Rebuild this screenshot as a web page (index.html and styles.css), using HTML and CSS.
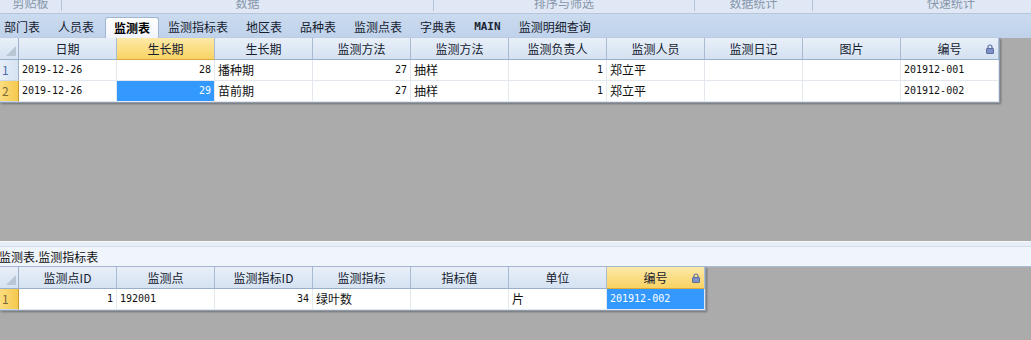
FILE: index.html
```html
<!DOCTYPE html>
<html lang="zh">
<head>
<meta charset="utf-8">
<title>监测表</title>
<link rel="stylesheet" href="styles.css">
</head>
<body>
<div class="ribbon">
  <div class="group g1"><span class="glabel">剪贴板</span></div>
  <div class="group g2"><span class="glabel">数据</span></div>
  <div class="group g3"><span class="glabel">排序与筛选</span></div>
  <div class="group g4"><span class="glabel">数据统计</span></div>
  <div class="group g5"><span class="glabel">快速统计</span></div>
</div>
<div class="tabs">
  <div class="tab first">部门表</div>
  <div class="tab">人员表</div>
  <div class="tab active">监测表</div>
  <div class="tab">监测指标表</div>
  <div class="tab">地区表</div>
  <div class="tab">品种表</div>
  <div class="tab">监测点表</div>
  <div class="tab">字典表</div>
  <div class="tab mono">MAIN</div>
  <div class="tab">监测明细查询</div>
</div>

<div class="grid top-grid">
  <div class="hc corner"><svg class="tri" width="10" height="10" viewBox="0 0 10 10"><polygon points="10,0 10,10 0,10" fill="#b9c6d6"/></svg></div>
  <div class="hc">日期</div>
  <div class="hc sel">生长期</div>
  <div class="hc">生长期</div>
  <div class="hc">监测方法</div>
  <div class="hc">监测方法</div>
  <div class="hc">监测负责人</div>
  <div class="hc">监测人员</div>
  <div class="hc">监测日记</div>
  <div class="hc">图片</div>
  <div class="hc">编号<svg class="lock" width="8" height="10" viewBox="0 0 8 10"><path d="M2 4.5V3a2 2 0 0 1 4 0v1.5" fill="none" stroke="#5b6fa8" stroke-width="1.2"/><rect x="0.5" y="4.5" width="7" height="5" rx="0.5" fill="#7d90c8" stroke="#4a5c96" stroke-width="0.8"/></svg></div>

  <div class="ri">1</div>
  <div class="c num">2019-12-26</div>
  <div class="c num r">28</div>
  <div class="c">播种期</div>
  <div class="c num r">27</div>
  <div class="c">抽样</div>
  <div class="c num r">1</div>
  <div class="c">郑立平</div>
  <div class="c"></div>
  <div class="c"></div>
  <div class="c num">201912-001</div>

  <div class="ri act">2</div>
  <div class="c num">2019-12-26</div>
  <div class="c num r pick">29</div>
  <div class="c">苗前期</div>
  <div class="c num r">27</div>
  <div class="c">抽样</div>
  <div class="c num r">1</div>
  <div class="c">郑立平</div>
  <div class="c"></div>
  <div class="c"></div>
  <div class="c num">201912-002</div>
</div>

<div class="spacer"></div>

<div class="subpanel">
  <div class="subtitle">监测表.监测指标表</div>
</div>

<div class="grid bottom-grid">
  <div class="hc corner"><svg class="tri" width="10" height="10" viewBox="0 0 10 10"><polygon points="10,0 10,10 0,10" fill="#b9c6d6"/></svg></div>
  <div class="hc">监测点ID</div>
  <div class="hc">监测点</div>
  <div class="hc">监测指标ID</div>
  <div class="hc">监测指标</div>
  <div class="hc">指标值</div>
  <div class="hc">单位</div>
  <div class="hc sel">编号<svg class="lock" width="8" height="10" viewBox="0 0 8 10"><path d="M2 4.5V3a2 2 0 0 1 4 0v1.5" fill="none" stroke="#5b6fa8" stroke-width="1.2"/><rect x="0.5" y="4.5" width="7" height="5" rx="0.5" fill="#7d90c8" stroke="#4a5c96" stroke-width="0.8"/></svg></div>

  <div class="ri act">1</div>
  <div class="c num r">1</div>
  <div class="c num">192001</div>
  <div class="c num r">34</div>
  <div class="c">绿叶数</div>
  <div class="c"></div>
  <div class="c">片</div>
  <div class="c num pick">201912-002</div>
</div>
</body>
</html>
```

FILE: styles.css
```css
html, body {
  margin: 0;
  padding: 0;
}
body {
  background: #ababab;
  font-family: "Noto Sans CJK SC", "Noto Sans", sans-serif;
  font-size: 12px;
  color: #111;
  width: 1031px;
  height: 340px;
  overflow: hidden;
}

/* ribbon group labels (clipped at top) */
.ribbon {
  height: 13px;
  background: #dfe8f4;
  border-bottom: 1px solid #b6c7dc;
  display: flex;
  overflow: hidden;
}
.group {
  flex: none;
  height: 11px;
  display: flex;
  justify-content: center;
  overflow: visible;
  border-right: 1px solid #b4c3d6;
  box-sizing: border-box;
}
.g1 { width: 62px; }
.g2 { width: 372px; }
.g3 { width: 261px; }
.g4 { width: 118px; }
.g5 { width: 276px; border-right: none; }
.glabel {
  color: #8796ab;
  line-height: 14px;
  margin-top: -4px;
  white-space: nowrap;
}

/* tab strip */
.tabs {
  height: 24px;
  background: linear-gradient(#cbdbef, #bfd2ea);
  display: flex;
  align-items: flex-end;
  padding-left: 4px;
  box-sizing: border-box;
}
.tab {
  height: 21px;
  line-height: 20px;
  padding: 0 9px;
  white-space: nowrap;
  color: #15202e;
  box-sizing: border-box;
}
.tab.first { padding-left: 0; }
.tab.mono {
  font-family: "DejaVu Sans Mono", monospace;
  font-size: 11px;
  font-weight: bold;
  color: #1b2533;
}
.tab.active {
  background: linear-gradient(#ffffff, #f1f5fb);
  border: 1px solid #a3b6cf;
  border-bottom: none;
  border-radius: 3px 3px 0 0;
  font-weight: bold;
  padding: 0 8px;
  margin-left: 2px;
  color: #000;
}

/* grids */
.grid {
  display: grid;
  background: #fff;
  border-right: 1px solid #8e9db2;
  border-bottom: 1px solid #8e9db2;
  box-shadow: 1px 1px 2px rgba(0, 0, 0, 0.35);
  width: max-content;
}
.top-grid {
  grid-template-columns: 19px repeat(10, 98px);
  grid-template-rows: 22px 21px 21px;
}
.bottom-grid {
  grid-template-columns: 19px repeat(7, 98px);
  grid-template-rows: 22px 21px;
}
.hc {
  position: relative;
  background: linear-gradient(#e8eff8, #d5e2f2);
  border-right: 1px solid #a9bbd2;
  border-bottom: 1px solid #9aafca;
  box-sizing: border-box;
  text-align: center;
  line-height: 21px;
  white-space: nowrap;
  color: #14202e;
}
.hc.sel {
  background: linear-gradient(#fdeaa9, #f9d262);
  border-bottom: 1px solid #d9a93e;
}
.hc.corner {
  border-right: 1px solid #9db1cb;
}
.tri {
  position: absolute;
  right: 2px;
  bottom: 3px;
}
.lock {
  position: absolute;
  right: 4px;
  top: 6px;
}
.ri {
  background: linear-gradient(90deg, #e6edf7, #d7e3f2);
  border-right: 1px solid #9db1cb;
  border-bottom: 1px solid #c9d6e6;
  box-sizing: border-box;
  color: #4a6fa8;
  line-height: 20px;
  padding-left: 2px;
}
.ri.act {
  background: linear-gradient(90deg, #fbdc7e, #f6c94f);
  border-right: 1px solid #c99a30;
  color: #7a6a3a;
}
.c {
  border-right: 1px solid #e3e8ef;
  border-bottom: 1px solid #e3e8ef;
  box-sizing: border-box;
  line-height: 20px;
  padding: 0 3px;
  white-space: nowrap;
  overflow: hidden;
  color: #111;
}
.c.num {
  font-family: "DejaVu Sans Mono", "Liberation Mono", monospace;
  font-size: 10px;
}
.c.r { text-align: right; }
.c.pick {
  background: #3399ff;
  color: #fff;
}

.spacer {
  height: 138px;
}

.subpanel {
  background: #e8eef6;
  border-top: 1px solid #f6f9fc;
  padding-top: 4px;
}
.subtitle {
  height: 21px;
  line-height: 20px;
  background: #f0f5fb;
  border-top: 1px solid #d3deec;
  border-bottom: 1px solid #a9bcd4;
  box-sizing: border-box;
  margin-left: -1px;
  color: #111;
  white-space: nowrap;
}
```
